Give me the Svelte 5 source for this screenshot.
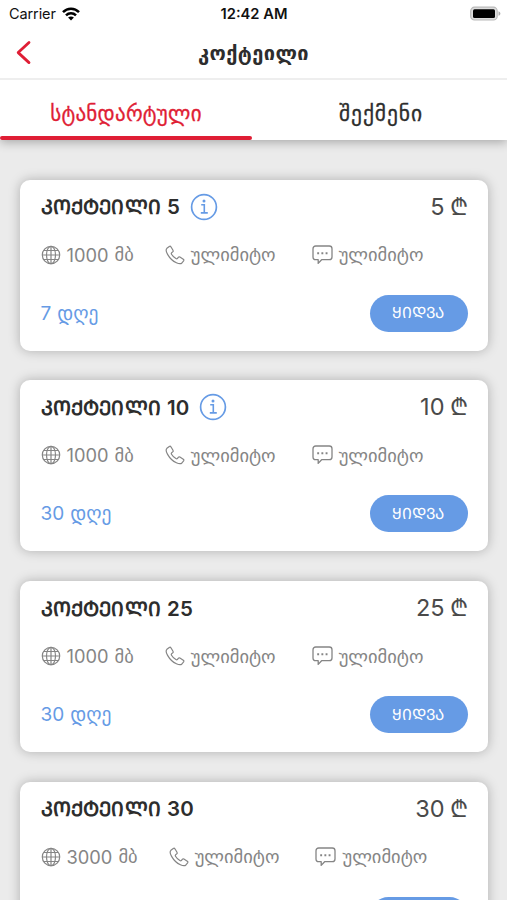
<script>
  const plans = [
    { n: '5', info: true, mb: '1000', days: '7' },
    { n: '10', info: true, mb: '1000', days: '30' },
    { n: '25', info: false, mb: '1000', days: '30' },
    { n: '30', info: false, mb: '3000', days: '30' }
  ];
</script>

<div class="screen">
  <header>
    <div class="status">
      <div class="carrier">
        <span>Carrier</span>
        <svg width="18" height="14" viewBox="0 0 18 14" fill="none" stroke="#000" stroke-width="2.5">
          <path d="M1 5.2C5.4.6 12.6.6 17 5.2" />
          <path d="M4 8.3c2.8-2.8 7.2-2.8 10 0" />
          <path d="M9 13.4 6.1 10.5c1.7-1.5 4.1-1.5 5.8 0z" fill="#000" stroke="none" />
        </svg>
      </div>
      <span class="time">12:42 AM</span>
      <svg class="battery" width="32" height="16" viewBox="0 0 32 16">
        <rect x="1.7" y="1.2" width="26.5" height="12.8" rx="3.8" fill="#ddd" stroke="#b9b9b9" stroke-width="1.2" />
        <rect x="4" y="3.3" width="22" height="8.7" rx="1.5" />
        <path d="M29.5 5.2c2.5 1 2.5 3.6 0 4.6z" fill="#aaa" />
      </svg>
    </div>
    <div class="nav">
      <svg width="18" height="26" viewBox="0 0 18 26" fill="none" stroke="#df1e35" stroke-width="2.8" stroke-linecap="round" stroke-linejoin="round">
        <path d="M14 2.5 3.2 12.6l10.800 10" />
      </svg>
      <h1>კოქტეილი</h1>
    </div>
    <nav class="tabs">
      <div class="tab active"><span>სტანდარტული</span><i></i></div>
      <div class="tab second"><span>შექმენი</span></div>
    </nav>
  </header>

  <main>
    {#each plans as p}
      <section class="card">
        <div class="top">
          <h2><span class="name">ᲙᲝᲥᲢᲔᲘᲚᲘ</span> <span class="num">{p.n}</span></h2>
          {#if p.info}
            <svg class="info" width="28" height="28" viewBox="0 0 28 28" fill="none" stroke="#669be5" stroke-width="1.7">
              <circle cx="14" cy="14" r="12.4" />
              <path d="M11.2 11.8h3.1v8M10.8 19.9h7" stroke-width="1.6" />
              <circle cx="14" cy="8" r="1.5" fill="#669be5" stroke="none" />
            </svg>
          {/if}
          <div class="price"><span>{p.n}</span><span class="lari">₾</span></div>
        </div>
        <div class="features">
          <div class="feature data">
            <svg width="20" height="20" viewBox="0 0 20 20" fill="none" stroke="#858585" stroke-width="1.2">
              <circle cx="10" cy="10" r="8.7" />
              <ellipse cx="10" cy="10" rx="4.5" ry="8.7" />
              <path d="M10 1.2v17.6M1.2 10h17.6M2.6 5.5h14.8M2.6 14.5h14.8" />
            </svg>
            <span class="amount">{p.mb}</span><span class="geo">მბ</span>
          </div>
          <div class="feature call">
            <svg width="20" height="20" viewBox="0 0 20 20" fill="none" stroke="#858585" stroke-width="1.2" stroke-linejoin="round">
              <path d="M4.3 1.5 1.9 3.3C.8 4.4 1.2 7 2.6 9.4c2.1 3.7 5.3 6.8 8.8 8.4 2.300 1 4.500 1.200 5.500.2l1.700-2.200c.4-.6.3-1.200-.3-1.600l-3.400-2.200c-.6-.4-1.200-.2-1.600.3l-1 1.300c-.4.4-.9.3-1.400 0-1.800-1.100-3.300-2.600-4.400-4.400-.3-.5-.3-1 .1-1.400l1.100-.9c.5-.4.7-1 .3-1.600L5.900 1.800C5.500 1.200 4.900 1.100 4.300 1.500z" />
            </svg>
            <span class="geo">ულიმიტო</span>
          </div>
          <div class="feature">
            <svg width="21" height="20" viewBox="0 0 21 20" fill="none" stroke="#858585" stroke-width="1.3" stroke-linejoin="round">
              <path d="M3.7 1h13.600a2.700 2.700 0 0 1 2.700 2.700v8.300a2.700 2.700 0 0 1-2.700 2.700H9.600L6.200 18.400v-3.700H3.700A2.700 2.700 0 0 1 1 12V3.700A2.700 2.700 0 0 1 3.700 1z" />
              <path d="M5.2 8.200h1.900M9.400 8.200h1.900M13.600 8.200h1.900" stroke-width="1.9" />
            </svg>
            <span class="geo">ულიმიტო</span>
          </div>
        </div>
        <div class="bottom">
          <div class="days"><span>{p.days}</span><span class="unit">დღე</span></div>
          <button>ᲧᲘᲓᲕᲐ</button>
        </div>
      </section>
    {/each}
  </main>
</div>

<style>
  :global(body) { margin: 0; background: #ebebeb; overflow: hidden; }
  .screen {
    height: 900px;
    overflow: hidden;
    background: #ebebeb;
    font-family: Inter, "DejaVu Sans", sans-serif;
    color: #2d2d2d;
  }
  svg { display: block; flex: none; }
  header { position: relative; background: #fff; height: 140px; box-shadow: 0 2px 10px rgba(0,0,0,.3); }
  .status { display: grid; grid-template-columns: 1fr auto 1fr; align-items: center; height: 27px; padding: 0 6px 0 9px; color: #111; }
  .carrier { display: flex; align-items: center; gap: 6px; font-size: 14.5px; letter-spacing: -.1px; }
  .time { font-size: 14.7px; font-weight: 600; margin-right: 2px; }
  .battery { justify-self: end; }
  .nav { display: grid; grid-template-columns: 18px 1fr 18px; align-items: center; height: 51px; padding: 0 15px; border-bottom: 2px solid #eee; }
  h1 { margin: 0; text-align: center; font: 700 20px "DejaVu Sans", sans-serif; letter-spacing: .4px; }
  .tabs { display: grid; grid-template-columns: 252px 1fr; height: 60px; }
  .tab { position: relative; box-sizing: border-box; display: flex; align-items: center; justify-content: center; padding-top: 7px; font: 21px "DejaVu Sans", sans-serif; letter-spacing: .25px; -webkit-text-stroke: .3px currentColor; }
  .tab i { position: absolute; left: 0; right: 0; bottom: 0; height: 4px; border-radius: 2px; background: #df1e35; }
  .second { font-size: 21.500px; letter-spacing: .9px; padding-left: 3px; }
  .active { color: #df1e35; }
  main { display: flex; flex-direction: column; gap: 29.800px; padding: 39.500px 19.500px 0; }
  .card { box-sizing: border-box; flex: none; height: 171px; border-radius: 10px; padding: 12px 20px 19px 21px; background: #fff; box-shadow: 0 0 12px rgba(0,0,0,.26); }
  .top { display: flex; align-items: center; height: 30px; }
  h2 { display: flex; align-items: baseline; gap: 6px; margin: 0; font-size: 20.500px; font-weight: 600; }
  .name { font: 700 20px "DejaVu Sans", sans-serif; letter-spacing: .2px; }
  .info { margin-left: 10px; }
  .price { display: flex; align-items: baseline; gap: 5px; margin: -2px 0 0 auto; font-size: 23.500px; color: #4a4a4a; }
  .lari { font-family: "DejaVu Sans", sans-serif; }
  .features { display: flex; align-items: center; height: 24px; margin-top: 21px; color: #858585; }
  .feature { display: flex; align-items: center; gap: 6px; font-size: 18.300px; }
  .geo, .unit { font-family: "DejaVu Sans", sans-serif; font-size: 18.500px; }
  .unit { font-size: 19.500px; }
  .data { margin-right: 31px; }
  .call { margin-right: 36px; }
  .bottom { display: flex; align-items: center; justify-content: space-between; height: 37px; margin-top: 28px; }
  .days { display: flex; align-items: baseline; gap: 6px; color: #669be5; font-size: 19px; }
  button { width: 98px; height: 37px; border: 0; border-radius: 19px; padding: 0 2px 2px 0; background: #669be5; color: #fff; font: 15.500px "DejaVu Sans", sans-serif; }
</style>
